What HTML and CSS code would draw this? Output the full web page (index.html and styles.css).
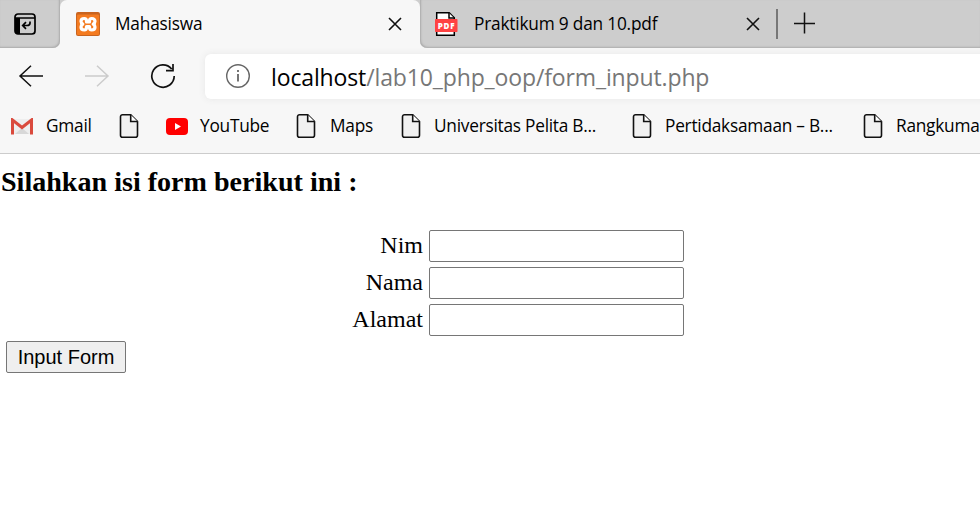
FILE: index.html
```html
<!DOCTYPE html>
<html lang="id">
<head>
<meta charset="utf-8">
<title>Mahasiswa</title>
<link rel="stylesheet" href="styles.css">
</head>
<body>
<svg class="defs" width="0" height="0">
  <symbol id="page" viewBox="0 0 20 26"><path d="M3.500 1.700h8.200l6.800 6.800v13.700a2 2 0 0 1-2 2h-13a2 2 0 0 1-2-2v-18.500a2 2 0 0 1 2-2z" fill="#f1f1f1" stroke="#111" stroke-width="1.600"/><path d="M11.700 1.700v6.800h6.800" fill="#fff" stroke="#111" stroke-width="1.600"/></symbol>
  <symbol id="close" viewBox="0 0 14 14"><path d="M1 1l12 12M13 1L1 13" stroke="#111" stroke-width="1.600" fill="none"/></symbol>
</svg>
<header class="browser">
  <div class="tabs">
    <div class="tab-actions">
      <svg width="22" height="22" viewBox="0 0 22 22"><rect x="1" y="1" width="20" height="20" rx="3" fill="none" stroke="#000" stroke-width="1.700"/><path d="M1 5h20" stroke="#000" stroke-width="1.500"/><path d="M1 5h5v16h-3l-2-2z"/><path d="M16 8.500v1.500q0 2.500-3 2.500H9M12 9.200l-3.300 3.300 3.300 3.300" fill="none" stroke="#000" stroke-width="1.700"/></svg>
    </div>
    <div class="active-wrap"><div class="tab active">
      <svg width="24" height="24" viewBox="0 0 24 24"><rect width="24" height="24" rx="2" fill="#c9641f"/><rect x="1" y="2.500" width="22" height="20.500" rx="1" fill="#f47b20"/><path d="M8.300 6.500c-2.300 0-3.300 1.200-3.300 2.800 0 1.300.7 2.200 1.800 2.900-1.100.7-1.800 1.600-1.800 2.900 0 1.700 1 2.900 3.300 2.900 1.800 0 2.200-1.200 2.200-2.700v-.8h3v.8c0 1.500.4 2.700 2.200 2.700 2.300 0 3.300-1.200 3.300-2.900 0-1.300-.7-2.200-1.800-2.900 1.100-.7 1.800-1.600 1.800-2.900 0-1.600-1-2.800-3.300-2.800-1.800 0-2.200 1.200-2.200 2.500v1h-3v-1c0-1.300-.4-2.500-2.200-2.500z" fill="none" stroke="#fff" stroke-width="3.200" stroke-linejoin="round"/></svg>
      <span class="tab-title first">Mahasiswa</span>
      <svg class="x" width="14" height="14"><use href="#close"/></svg>
    </div></div>
    <div class="rest">
      <svg class="pdf" width="24" height="24" viewBox="0 0 24 24"><path d="M2.700.8h12.500l5.100 5.100v17.300H2.700z" fill="#fff" stroke="#000" stroke-width="1.500"/><path d="M15 1v5h5" fill="#fff" stroke="#000" stroke-width="1.500"/><rect x="1" y="7" width="22.500" height="13" rx=".7" fill="#ff4242"/><text class="pdf-text" x="12.500" y="16.500" text-anchor="middle">PDF</text></svg>
      <span class="tab-title second">Praktikum 9 dan 10.pdf</span>
      <svg class="x" width="14" height="14"><use href="#close"/></svg>
      <span class="divider"></span>
      <svg class="plus" width="22" height="22" viewBox="0 0 22 22"><path d="M10.500 .5v21M0 11.500h21" stroke="#111" stroke-width="1.500"/></svg>
    </div>
  </div>
  <div class="toolbar">
    <svg class="back" width="26" height="24" viewBox="0 0 26 24"><path d="M25 12H2M13 1.700L2 12l11 10.300" fill="none" stroke="#111" stroke-width="1.500"/></svg>
    <svg class="forward" width="26" height="24" viewBox="0 0 26 24"><path d="M1 12h23M13 1.700L24 12 13 22.300" fill="none" stroke="#ccc" stroke-width="1.500"/></svg>
    <svg class="reload" width="26" height="26" viewBox="0 0 26 26"><path d="M24.200 13A11.200 11.200 0 1 1 21.700 6M16 7.700h7V1" fill="none" stroke="#111" stroke-width="1.700"/></svg>
    <div class="address">
      <svg width="26" height="26" viewBox="0 0 26 26"><circle cx="13" cy="13" r="11.300" fill="none" stroke="#666" stroke-width="1.400"/><path d="M13 11v7.500M13 7v2" stroke="#666" stroke-width="1.800"/></svg>
      <span class="url"><b>localhost</b>/lab10_php_oop/form_input.php</span>
    </div>
  </div>
  <nav class="bookmarks">
    <span class="mark gmail"><svg width="22" height="17" viewBox="0 0 22 17"><path d="M1 1h20v15H1z" fill="#eee"/><path d="M4 16l7-6 7 6z" fill="#d8d8d8"/><path d="M1.500 16.500V2L11 9.500 20.500 2v14.500" fill="none" stroke="#da4a3d" stroke-width="3"/></svg><span>Gmail</span></span>
    <span class="mark blank"><svg width="20" height="26"><use href="#page"/></svg></span>
    <span class="mark youtube"><svg width="22" height="17" viewBox="0 0 22 17"><rect width="22" height="17" rx="4" fill="#f00"/><path d="M9 5l6 3.500L9 12z" fill="#fff"/></svg><span>YouTube</span></span>
    <span class="mark maps"><svg width="20" height="26"><use href="#page"/></svg><span>Maps</span></span>
    <span class="mark univ"><svg width="20" height="26"><use href="#page"/></svg><span>Universitas Pelita B...</span></span>
    <span class="mark pert"><svg width="20" height="26"><use href="#page"/></svg><span>Pertidaksamaan – B...</span></span>
    <span class="mark rang"><svg width="20" height="26"><use href="#page"/></svg><span>Rangkuma</span></span>
  </nav>
</header>
<main>
  <h3>Silahkan isi form berikut ini :</h3>
  <form>
    <div class="fields">
      <label for="nim">Nim</label><input id="nim" type="text">
      <label for="nama">Nama</label><input id="nama" type="text">
      <label for="alamat">Alamat</label><input id="alamat" type="text">
    </div>
    <button type="button">Input Form</button>
  </form>
</main>
</body>
</html>
```
FILE: styles.css
```css
* { box-sizing: border-box; }
body { margin: 0; width: 980px; height: 505px; overflow: hidden; background: #fff; color: #000; font: 24px "Liberation Serif", serif; }
svg { display: block; flex: none; }
.defs { position: absolute; }
.browser { height: 154px; background: #f7f7f7; border-bottom: 1px solid #ccc; font-family: "Open Sans", sans-serif; overflow: hidden; }
.tabs { height: 48px; display: flex; }
.tab-actions { width: 60px; background: #cdcdcd; border-radius: 0 0 7px 0; padding: 13px 0 0 14px; box-shadow: inset -1px -1px 2px #aaa; }
.active-wrap { width: 360px; background: linear-gradient(#cdcdcd 10px, #f7f7f7 10px); }
.tab { height: 48px; display: flex; align-items: center; background: #f7f7f7; border-radius: 7px 7px 0 0; padding: 0 18px 0 16px; }
.tab-title { font-size: 17.3px; line-height: 24px; white-space: nowrap; letter-spacing: -.2px; }
.first { margin-left: 15px; }
.x { margin-left: auto; }
.rest { width: 560px; display: flex; align-items: center; background: #cdcdcd; border-radius: 0 0 0 7px; box-shadow: inset 1px -1px 2px #aaa; padding-left: 14px; }
.pdf-text { font: 800 8px "Open Sans", sans-serif; fill: #fff; letter-spacing: .7px; }
.second { width: 272px; margin-left: 16px; }
.rest .x { margin-left: 0; }
.divider { width: 1.5px; height: 30px; background: #777; margin: 0 0 0 16px; }
.plus { margin: -2px 0 0 16px; }
.toolbar { height: 57px; display: flex; align-items: center; padding: 0 0 2px 18px; }
.forward { margin-left: 40px; }
.reload { margin-left: 40px; }
.address { width: 790px; height: 45px; margin: 1px 0 0 29px; background: #fff; border-radius: 6px; display: flex; align-items: center; padding-left: 20px; box-shadow: 0 0 7px #e6e6e6; flex: none; }
.url { margin: 2px 0 0 20px; font-size: 23px; letter-spacing: -.13px; color: #777; white-space: nowrap; }
.url b { font-weight: 400; color: #000; }
.bookmarks { height: 42px; display: flex; align-items: center; padding-left: 11px; white-space: nowrap; font-size: 17.3px; letter-spacing: -.25px; }
.mark { display: flex; align-items: center; flex: none; }
.mark span { line-height: 24px; }
.gmail { width: 108px; gap: 13px; }
.blank { width: 47px; }
.youtube { width: 130px; gap: 12px; }
.maps { width: 105px; gap: 14px; }
.univ { width: 231px; gap: 13px; }
.pert { width: 231px; gap: 13px; }
.rang { gap: 13px; }
main { padding-top: 12px; }
h3 { font-size: 28.08px; line-height: 32px; font-weight: 700; margin: 0 0 32px 1px; }
.fields { display: grid; grid-template-columns: 423px 255px; gap: 5px 6px; text-align: right; line-height: 30px; }
input { width: 255px; height: 32px; border: 1px solid #767676; border-radius: 2px; background: #fff; padding: 0 4px; font: 20px "Liberation Sans", sans-serif; }
button { display: block; width: 120px; height: 32px; margin: 5px 0 0 6px; padding: 0; border: 1px solid #767676; border-radius: 2px; background: #efefef; color: #000; font: 20px "Liberation Sans", sans-serif; }
```
